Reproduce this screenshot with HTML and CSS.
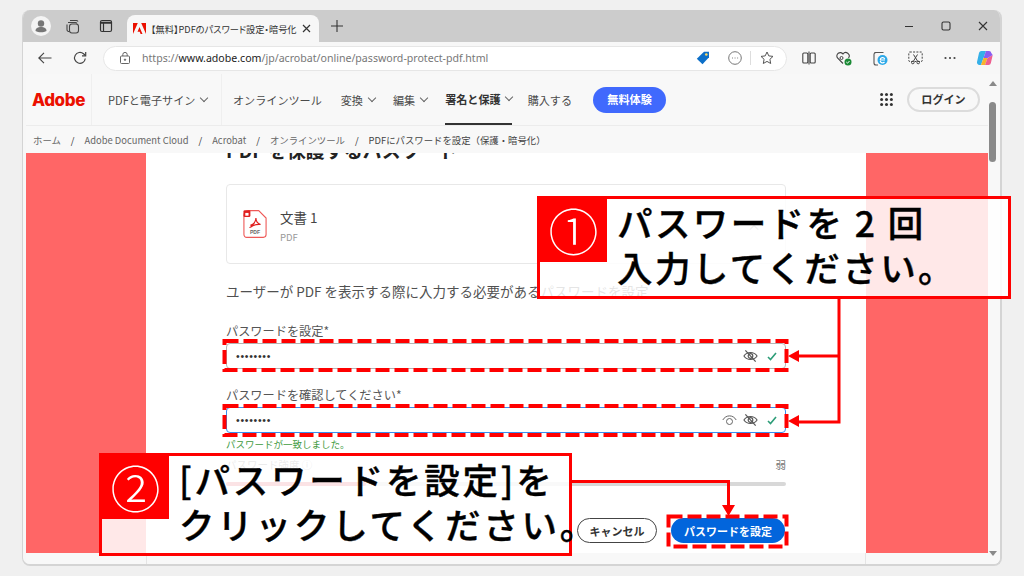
FILE: index.html
```html
<!DOCTYPE html>
<html lang="ja">
<head>
    <meta charset="UTF-8">
    <title>PDFにパスワードを設定</title>
    <link rel="stylesheet" href="styles.css">
</head>
<body>
    <div class="window">
        <!-- tab strip -->
        <div class="tabstrip">
            <div class="profile">
                <svg width="20" height="20" viewBox="0 0 20 20"><circle cx="10" cy="10" r="10" fill="#f4f4f4"/><circle cx="10" cy="7.5" r="3.2" fill="#777"/><path d="M4.5 15c0-3 2.5-4 5.500-4s5.500 1 5.500 4c-1.500 1-3.500 1.300-5.500 1.300S6 16 4.500 15z" fill="#777"/></svg>
            </div>
            <svg class="strip-icon" width="16" height="16" viewBox="0 0 16 16" fill="none" stroke="#444" stroke-width="1.100"><path d="M5 2.500h6a2 2 0 0 1 2 1M3 4.500h7a2 2 0 0 1 2 1"/><rect x="4.500" y="6" width="9" height="9" rx="2.500"/><path d="M2 6.500v5a2 2 0 0 0 2.500 2"/></svg>
            <svg class="strip-icon" width="14" height="14" viewBox="0 0 14 14" fill="none" stroke="#333" stroke-width="1.200"><rect x="1.500" y="1.500" width="11" height="11" rx="1.500"/><path d="M1.500 3.800h11" stroke-width="2"/><path d="M4.500 4v8.500"/></svg>
            <div class="tab">
                <svg width="13" height="11" viewBox="0 0 13 11"><path d="M4.800 0H0v11zM8.200 0H13v11zM6.500 4l3 7H7.600l-.9-2.200H4.500z" fill="#eb1000"/></svg>
                <span class="tab-title">【無料】PDFのパスワード設定・暗号化</span>
                <svg width="9" height="9" viewBox="0 0 9 9" stroke="#333" stroke-width="1.200"><path d="M1 1l7 7M8 1L1 8"/></svg>
            </div>
            <svg class="newtab" width="12" height="12" viewBox="0 0 12 12" stroke="#333" stroke-width="1.100"><path d="M6 0v12M0 6h12"/></svg>
            <div class="winctl">
                <svg width="10" height="10" viewBox="0 0 10 10" stroke="#333" stroke-width="1.100"><path d="M1 5.500h8"/></svg>
                <svg width="10" height="10" viewBox="0 0 10 10" fill="none" stroke="#333" stroke-width="1.100"><rect x="1" y="1" width="8" height="8" rx="1.500"/></svg>
                <svg width="10" height="10" viewBox="0 0 10 10" stroke="#333" stroke-width="1.100"><path d="M1 1l8 8M9 1L1 9"/></svg>
            </div>
        </div>

        <!-- address bar -->
        <div class="toolbar">
            <svg class="nav-back" width="14" height="12" viewBox="0 0 14 12" fill="none" stroke="#444" stroke-width="1.100"><path d="M13.500 6H.8M6 .8L.8 6 6 11.200"/></svg>
            <svg class="nav-reload" width="14" height="14" viewBox="0 0 14 14" fill="none" stroke="#444" stroke-width="1.200"><path d="M12.300 7.500A5.400 5.400 0 1 1 10.500 2.800L12.500 4.500"/><path d="M12.700 1v3.800H9"/></svg>
            <div class="urlbar">
                <svg width="10" height="12" viewBox="0 0 10 12" fill="none" stroke="#666" stroke-width="1"><rect x=".5" y="4" width="9" height="7.500" rx="1"/><path d="M2.800 4V2.600a2.200 2.200 0 0 1 4.400 0V4"/><circle cx="5" cy="7.700" r=".7" fill="#666"/></svg>
                <span class="url"><span class="url-dim">https://</span>www.adobe.com<span class="url-dim">/jp/acrobat/online/password-protect-pdf.html</span></span>
                <svg class="bar-tag" width="14" height="14" viewBox="0 0 14 14"><path d="M8 .8h5v5.400L6.500 13.200.8 7.800z" fill="#0c6fc8"/><circle cx="10.300" cy="3.500" r="1.300" fill="#ffd75e"/></svg>
                <svg class="bar-more" width="14" height="14" viewBox="0 0 14 14" fill="none" stroke="#777"><circle cx="7" cy="7" r="6.300"/><path d="M4 7h.9M6.600 7h.9M9.200 7h.9" stroke-width="1.200"/></svg>
                <span class="bar-sep"></span>
                <svg class="bar-star" width="14" height="14" viewBox="0 0 14 14" fill="none" stroke="#555"><path d="M7 1l1.800 3.900 4.200.5-3.100 2.900.8 4.200L7 10.400l-3.700 2.100.8-4.200L1 5.400l4.200-.5z"/></svg>
            </div>
            <div class="tool-icons">
                <svg width="14" height="14" viewBox="0 0 14 14" fill="none" stroke="#444" stroke-width="1.100"><rect x=".8" y="2" width="5" height="10" rx="1"/><rect x="8.200" y="2" width="5" height="10" rx="1"/><path d="M7 .5v13"/></svg>
                <svg width="16" height="15" viewBox="0 0 16 15"><path d="M7 12.500L1.500 7a3.300 3.300 0 0 1 5.500-4 3.300 3.300 0 0 1 5.500 4" fill="none" stroke="#444" stroke-width="1.100"/><circle cx="5.500" cy="7" r="1.500" fill="none" stroke="#444"/><circle cx="12" cy="11" r="3.500" fill="#1a8a35"/><path d="M10.300 11l1.200 1.200 2-2.200" fill="none" stroke="#fff"/></svg>
                <svg width="15" height="15" viewBox="0 0 15 15"><path d="M5.500 1.500H3a2 2 0 0 0-2 2V12a2 2 0 0 0 2 2h2" fill="none" stroke="#555" stroke-width="1.100"/><path d="M1.500 1.500h9" stroke="#555"/><circle cx="9.500" cy="9" r="5" fill="#2aa8e8"/><path d="M7 9h5M7.300 9a2.300 2.300 0 0 1 4.400-1M11.500 11a2.500 2.500 0 0 1-4.300-1" fill="none" stroke="#fff" stroke-width="1.200"/></svg>
                <svg width="15" height="14" viewBox="0 0 15 14" fill="none" stroke="#444"><rect x=".8" y="1" width="13.400" height="9.500" rx="1" stroke-dasharray="2 1.300"/><path d="M5.500 3.500l4 6.500M9.500 3.500l-4 6.500"/><circle cx="4.800" cy="11.500" r="1.300"/><circle cx="10.200" cy="11.500" r="1.300"/></svg>
                <svg width="12" height="4" viewBox="0 0 12 4" fill="#444"><circle cx="1.500" cy="2" r="1.100"/><circle cx="6" cy="2" r="1.100"/><circle cx="10.500" cy="2" r="1.100"/></svg>
                <svg width="18" height="18" viewBox="0 0 18 18"><path d="M5 2h5L7.500 9 5 16H3.500A2.500 2.500 0 0 1 1 13l2-9a2.500 2.500 0 0 1 2-2z" fill="#35b0e8"/><path d="M5 16l2.500-7h4L9 16z" fill="#f7b32b"/><path d="M9 16h3.500a2.500 2.500 0 0 0 2.400-2l1.800-8-5.200 3z" fill="#ee5f8f"/><path d="M10 2h3a2.300 2.300 0 0 1 2.300 2l1.400 2-5.200 3H7.500z" fill="#8a5cf0"/></svg>
            </div>
        </div>

        <div class="viewport">
            <div class="page">
                <header class="site-header">
                    <div class="logo-cell"><span class="logo">Adobe</span></div>
                    <nav class="nav-first">
                        <a>PDFと電子サイン<i class="chev"></i></a>
                    </nav>
                    <nav class="nav-main">
                        <a class="nav-tools">オンラインツール</a>
                        <a>変換<i class="chev"></i></a>
                        <a>編集<i class="chev"></i></a>
                        <a class="nav-active">署名と保護<i class="chev"></i></a>
                        <a>購入する</a>
                        <span class="trial">無料体験</span>
                    </nav>
                    <div class="header-right">
                        <svg width="13" height="13" viewBox="0 0 13 13" fill="#333"><circle cx="1.600" cy="1.600" r="1.500"/><circle cx="6.500" cy="1.600" r="1.500"/><circle cx="11.400" cy="1.600" r="1.500"/><circle cx="1.600" cy="6.500" r="1.500"/><circle cx="6.500" cy="6.500" r="1.500"/><circle cx="11.400" cy="6.500" r="1.500"/><circle cx="1.600" cy="11.400" r="1.500"/><circle cx="6.500" cy="11.400" r="1.500"/><circle cx="11.400" cy="11.400" r="1.500"/></svg>
                        <span class="login">ログイン</span>
                    </div>
                </header>
                <div class="breadcrumbs">
                    <a>ホーム</a><b>/</b><a>Adobe Document Cloud</a><b>/</b><a>Acrobat</a><b>/</b><a>オンラインツール</a><b>/</b><a class="crumb-last">PDFにパスワードを設定（保護・暗号化）</a>
                </div>
                <div class="main">
                    <div class="side"></div>
                    <div class="center">
                        <h2>PDF を保護するパスワード</h2>
                        <div class="doc-card">
                            <svg width="24" height="30" viewBox="0 0 26 31" fill="none"><path d="M6 1h11l8 8v18a3 3 0 0 1-3 3H4a3 3 0 0 1-3-3V6a5 5 0 0 1 5-5z" stroke="#ee5a58" stroke-width="1.200"/><rect x=".5" y=".5" width="7.500" height="7.500" rx="1.500" fill="#e02020"/><rect x="2.500" y="3.500" width="3.500" height="3" fill="#fff"/><path d="M8 17c3-1 6-4 6-8 0 3 2 6 5 7-4-.3-8 .5-11 3 1 0 2-1 3-3" stroke="#e02020" stroke-width="1.300"/><text x="13" y="26" class="pdf-mark">PDF</text></svg>
                            <div class="doc-meta">
                                <div class="doc-name">文書 1</div>
                                <div class="doc-type">PDF</div>
                            </div>
                            <span class="doc-close">×</span>
                        </div>
                        <p class="desc">ユーザーが PDF を表示する際に入力する必要があるパスワードを設定</p>

                        <label class="field-label first">パスワードを設定*</label>
                        <div class="pw-input">
                            <span class="dots">••••••••</span>
                            <svg width="15" height="14" viewBox="0 0 16 14" fill="none" stroke="#555" stroke-width="1.200"><path d="M1 7c3.500-5 10.500-5 14 0-3.500 5-10.500 5-14 0z"/><circle cx="8" cy="7" r="2.500"/><path d="M2.500 1l11 12" stroke-width="1.300"/></svg>
                            <svg class="ok" width="10" height="9" viewBox="0 0 10 9" fill="none" stroke="#2d9d78" stroke-width="1.600"><path d="M1 5l2.500 2.500L9 1"/></svg>
                        </div>

                        <label class="field-label second">パスワードを確認してください*</label>
                        <div class="pw-input focused">
                            <span class="dots">••••••••</span>
                            <svg width="15" height="12" viewBox="0 0 15 12" fill="none" stroke="#666" stroke-width="1"><path d="M.8 6c3-5.500 10.400-5.500 13.400 0"/><circle cx="7.500" cy="7.500" r="3"/></svg>
                            <svg width="15" height="14" viewBox="0 0 16 14" fill="none" stroke="#555" stroke-width="1.200"><path d="M1 7c3.500-5 10.500-5 14 0-3.500 5-10.500 5-14 0z"/><circle cx="8" cy="7" r="2.500"/><path d="M2.500 1l11 12" stroke-width="1.300"/></svg>
                            <svg class="ok" width="10" height="9" viewBox="0 0 10 9" fill="none" stroke="#2d9d78" stroke-width="1.600"><path d="M1 5l2.500 2.500L9 1"/></svg>
                        </div>
                        <div class="match">パスワードが一致しました。</div>

                        <div class="strength-row">
                            <span>パスワード強度 ⓘ</span>
                            <span>弱</span>
                        </div>
                        <div class="strength-bar"><div class="strength-fill" style="width: 25%"></div></div>

                        <div class="actions">
                            <button class="btn-cancel">キャンセル</button>
                            <button class="btn-set">パスワードを設定</button>
                        </div>
                    </div>
                    <div class="side"></div>
                </div>
                <div class="page-foot"><div class="foot-center"></div></div>
            </div>
            <div class="scrollbar">
                <i class="sb-up"></i>
                <i class="sb-thumb"></i>
                <i class="sb-down"></i>
            </div>
        </div>
    </div>

    <!-- red annotations on top of the screenshot -->
    <svg class="marks" width="1024" height="576" viewBox="0 0 1024 576" fill="none" stroke="#ff0000">
        <rect class="dash" x="224.500" y="341" width="562" height="29"/>
        <rect class="dash" x="224.500" y="406" width="562" height="29"/>
        <rect class="dash" x="668.500" y="516.500" width="118" height="30"/>
        <path d="M839 299V422H795M839 356H795M572 481.500H728.500V508" stroke-width="3"/>
        <path d="M788 356l11-6v12zM788 421l11-6v12zM728.500 516l-6.500-11h13z" fill="#ff0000" stroke="none"/>
    </svg>

    <div class="note note-one">
        <span class="num">①</span>
        <div class="note-text">パスワードを 2 回<br>入力してください。</div>
    </div>
    <div class="note note-two">
        <span class="num">②</span>
        <div class="note-text">[パスワードを設定]を<br>クリックしてください。</div>
    </div>
</body>
</html>
```

FILE: styles.css
```css
body {
    margin: 0;
    background-color: #f0f0f0;
    font-family: "Noto Sans CJK JP", "Noto Sans", sans-serif;
    overflow: hidden;
}

/* browser window */
.window {
    box-sizing: border-box;
    width: 980px;
    height: 556px;
    margin: 10px 0 0 22px;
    display: flex;
    flex-direction: column;
    background-color: #f7f7f7;
    border: 1px solid #d4d4d4;
    border-width: 0 2px 2px 1px;
    border-radius: 8px;
    overflow: hidden;
}

.tabstrip {
    height: 32px;
    flex: none;
    display: flex;
    align-items: center;
    background-color: #cccccc;
    padding-left: 8px;
}

.profile {
    width: 20px;
    height: 20px;
    margin-right: 14px;
}

.strip-icon {
    margin-right: 18px;
}

.tab {
    box-sizing: border-box;
    width: 192px;
    height: 27px;
    margin: 5px 0 0 -4px;
    padding: 0 8px 0 6px;
    display: flex;
    align-items: center;
    gap: 5px;
    background-color: #f7f7f7;
    border-radius: 8px 8px 0 0;
}

.tab svg {
    flex: none;
}

.tab-title {
    flex: 1;
    min-width: 0;
    font-size: 9.200px;
    font-feature-settings: "palt";
    color: #333;
    white-space: nowrap;
}

.newtab {
    margin-left: 12px;
}

.winctl {
    margin-left: auto;
    margin-right: 12px;
    display: flex;
    gap: 27px;
}

.toolbar {
    height: 32px;
    flex: none;
    display: flex;
    align-items: center;
    background-color: #f7f7f7;
}

.nav-back {
    margin-left: 15px;
}

.nav-reload {
    margin-left: 21px;
}

.urlbar {
    box-sizing: border-box;
    width: 684px;
    height: 25px;
    margin-left: 16px;
    padding-left: 16px;
    display: flex;
    align-items: center;
    background-color: #fff;
    border: 1px solid #e6e6e6;
    border-radius: 13px;
}

.url {
    margin-left: 12px;
    font-family: "Noto Sans", sans-serif;
    font-size: 10.600px;
    color: #222;
    white-space: nowrap;
}

.url-dim {
    color: #777;
}

.bar-tag {
    margin-left: auto;
}

.bar-more {
    margin-left: 18px;
}

.bar-sep {
    width: 1px;
    height: 14px;
    margin: 0 9px 0 8px;
    background-color: #ddd;
}

.bar-star {
    margin-right: 12px;
}

.tool-icons {
    flex: 1;
    display: flex;
    align-items: center;
    justify-content: space-between;
    padding: 0 6px 0 15px;
}

.viewport {
    flex: 1;
    min-height: 0;
    display: flex;
    padding-left: 3px;
}

.page {
    width: 962px;
    display: flex;
    flex-direction: column;
    background-color: #f8f8f8;
    border-radius: 6px 0 0 0;
    overflow: hidden;
}

/* adobe header */
.site-header {
    height: 51px;
    flex: none;
    display: flex;
    align-items: stretch;
    border-bottom: 1px solid #ececec;
    font-size: 11.100px;
    color: #4b4b4b;
}

.logo-cell {
    box-sizing: border-box;
    width: 66px;
    display: flex;
    align-items: center;
    padding-left: 6px;
    border-right: 1px solid #efefef;
}

.logo {
    font-family: "Inter", sans-serif;
    font-weight: 800;
    font-size: 17px;
    letter-spacing: -0.4px;
    color: #eb1000;
}

.nav-first {
    width: 130px;
    display: flex;
    align-items: center;
    padding-left: 16px;
    box-sizing: border-box;
    border-right: 1px solid #efefef;
}

.nav-main {
    display: flex;
    align-items: center;
    gap: 16px;
    padding-left: 11px;
}

.site-header a {
    display: flex;
    align-items: center;
    height: 100%;
    box-sizing: border-box;
    white-space: nowrap;
}

.nav-tools {
    margin-right: 3px;
}

.nav-active {
    font-weight: 700;
    color: #333;
    border-bottom: 2px solid #333;
}

.chev {
    width: 5px;
    height: 5px;
    margin: -3px 2px 0 6px;
    border: solid #666;
    border-width: 0 1px 1px 0;
    transform: rotate(45deg);
}

.nav-active .chev {
    margin-right: 0;
    margin-left: 5px;
}

.trial {
    box-sizing: border-box;
    width: 73px;
    margin-left: 5px;
    text-align: center;
    height: 26px;
    line-height: 25px;
    border-radius: 13px;
    background-color: #4069fd;
    color: #fff;
    font-weight: 700;
}

.header-right {
    margin-left: auto;
    display: flex;
    align-items: center;
    gap: 14px;
    padding-right: 8px;
}

.login {
    box-sizing: border-box;
    width: 73px;
    height: 25px;
    line-height: 21px;
    text-align: center;
    border: 2px solid #dcdcdc;
    border-radius: 13px;
    font-weight: 700;
    color: #333;
}

.breadcrumbs {
    height: 27px;
    flex: none;
    display: flex;
    align-items: center;
    padding-left: 7px;
    font-size: 9.400px;
    color: #666;
    white-space: nowrap;
}

.breadcrumbs b {
    margin: 0 10px;
    font-weight: 400;
    color: #333;
}

.crumb-last {
    color: #444;
}

/* page body */
.main {
    height: 400px;
    flex: none;
    display: flex;
    overflow: hidden;
}

.side {
    width: 120px;
    flex: none;
    background-color: #ff6666;
}

.side:last-child {
    width: 122px;
}

.center {
    box-sizing: border-box;
    width: 720px;
    flex: none;
    padding: 0 80px;
    background-color: #fff;
}

h2 {
    margin: -15px 0 22px;
    font-size: 19px;
    line-height: 24px;
    font-weight: 700;
    color: #222;
}

.doc-card {
    box-sizing: border-box;
    height: 80px;
    padding: 0 24px 0 16px;
    display: flex;
    align-items: center;
    gap: 13px;
    border: 1px solid #e8e8e8;
    border-radius: 4px;
}

.doc-meta {
    margin-top: 3px;
}

.pdf-mark {
    font-size: 5.500px;
    font-weight: 700;
    font-family: "Liberation Sans", sans-serif;
    text-anchor: middle;
    fill: #666;
    stroke: none;
}

.doc-name {
    font-size: 13.500px;
    line-height: 18px;
    color: #444;
}

.doc-type {
    margin-top: 5px;
    font-size: 9.500px;
    line-height: 13px;
    color: #999;
}

.doc-close {
    margin-left: auto;
    font-size: 14px;
    color: #888;
}

.desc {
    margin: 17px 0 0;
    font-size: 13.500px;
    line-height: 20px;
    color: #505050;
    white-space: nowrap;
}

.field-label {
    display: block;
    font-size: 12.200px;
    line-height: 14px;
    color: #555;
    margin-bottom: 5px;
}

.field-label.first {
    margin-top: 23px;
}

.field-label.second {
    margin-top: 19px;
}

.pw-input {
    box-sizing: border-box;
    height: 26px;
    padding: 0 8px 0 9px;
    display: flex;
    align-items: center;
    gap: 6px;
    border: 1.500px solid #b3b3b3;
    border-radius: 4px;
}

.pw-input.focused {
    border-color: #378ef0;
}

.dots {
    margin-right: auto;
    font-family: "Liberation Sans", sans-serif;
    font-size: 10.500px;
    color: #333;
    letter-spacing: 0.7px;
}

.ok {
    margin-left: 3px;
}

.match {
    margin-top: 4px;
    font-size: 9.500px;
    line-height: 14px;
    color: #3e9a3e;
}

.strength-row {
    margin-top: 7px;
    display: flex;
    justify-content: space-between;
    font-size: 10.500px;
    line-height: 14px;
    color: #777;
}

.strength-bar {
    height: 4px;
    margin-top: 10px;
    background-color: #d8d8d8;
    border-radius: 2px;
}

.strength-fill {
    height: 100%;
    background-color: #e34850;
    border-radius: 2px;
}

.actions {
    margin-top: 32px;
    display: flex;
    justify-content: flex-end;
    gap: 14px;
}

.actions button {
    box-sizing: border-box;
    height: 25px;
    padding: 0;
    border-radius: 13px;
    font-family: inherit;
    font-size: 11px;
    font-weight: 700;
}

.btn-cancel {
    width: 80px;
    background-color: #fff;
    border: 1.500px solid #444;
    color: #333;
}

.btn-set {
    width: 114px;
    margin-right: 1px;
    background-color: #0265dc;
    border: none;
    color: #fff;
}

.page-foot {
    flex: 1;
    padding-left: 120px;
}

.foot-center {
    width: 720px;
    height: 100%;
    box-sizing: border-box;
    border-left: 1px solid #e5e5e5;
    border-right: 1px solid #e5e5e5;
}

.scrollbar {
    flex: 1;
    position: relative;
    background-color: #f8f8f8;
}

.scrollbar i {
    position: absolute;
    display: block;
}

.sb-up {
    top: 7px;
    left: 1px;
    border: 4px solid transparent;
    border-top: 0;
    border-bottom: 5px solid #8a8a8a;
}

.sb-thumb {
    top: 28px;
    left: 1px;
    width: 7px;
    height: 60px;
    border-radius: 4px;
    background-color: #8a8a8a;
}

.sb-down {
    bottom: 8px;
    left: 1px;
    border: 4px solid transparent;
    border-bottom: 0;
    border-top: 5px solid #8a8a8a;
}

/* annotations */
.marks {
    position: absolute;
    left: 0;
    top: 0;
}

.dash {
    stroke-width: 4;
    stroke-dasharray: 14 5;
}

.note {
    position: absolute;
    box-sizing: border-box;
    display: flex;
    align-items: flex-start;
    background-color: rgba(255, 255, 255, 0.85);
    border: 3px solid #ff0000;
    white-space: nowrap;
}

.note-one {
    left: 537px;
    top: 196px;
    width: 474px;
    height: 103px;
}

.note-two {
    left: 99px;
    top: 453px;
    width: 473px;
    height: 103px;
}

.num {
    width: 67px;
    height: 63px;
    flex: none;
    background-color: #ff0000;
    color: #fff;
    font-size: 50px;
    font-weight: 300;
    line-height: 60px;
    text-align: center;
}

.note-text {
    margin-left: 10px;
    font-size: 35.500px;
    line-height: 45px;
    font-weight: 500;
    letter-spacing: 2.400px;
    -webkit-text-stroke: 0.4px #000;
    color: #000;
}

.note-two .note-text {
    letter-spacing: 2.800px;
}
```
